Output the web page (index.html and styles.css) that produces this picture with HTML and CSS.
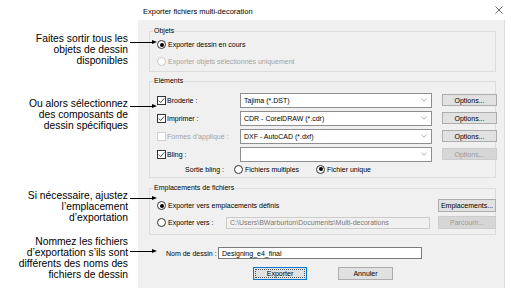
FILE: index.html
```html
<!DOCTYPE html>
<html lang="fr">
<head>
<meta charset="utf-8">
<title>Exporter fichiers multi-decoration</title>
<link rel="stylesheet" href="styles.css">
</head>
<body>
<div class="page">
  <aside class="notes">
    <p class="note n1">Faites sortir tous les<br>objets de dessin<br>disponibles<span class="arrow"></span></p>
    <p class="note n2">Ou alors sélectionnez<br>des composants de<br>dessin spécifiques<span class="arrow"></span></p>
    <p class="note n3">Si nécessaire, ajustez<br>l’emplacement<br>d’exportation<span class="arrow"></span></p>
    <p class="note n4">Nommez les fichiers<br>d’exportation s’ils sont<br>différents des noms des<br>fichiers de dessin<span class="arrow"></span></p>
  </aside>

  <div class="dialog">
    <div class="titlebar">
      <span class="title">Exporter fichiers multi-decoration</span>
      <svg class="close" width="8" height="8" viewBox="0 0 8 8"><path d="M0.5 0.5 L7.5 7.5 M7.5 0.5 L0.5 7.5" stroke="#444" stroke-width="0.8" fill="none"/></svg>
    </div>

    <div class="body">
      <fieldset class="grp objets">
        <legend>Objets</legend>
        <div class="row"><span class="radio on"></span><span>Exporter dessin en cours</span></div>
        <div class="row off"><span class="radio"></span><span>Exporter objets sélectionnés uniquement</span></div>
      </fieldset>

      <fieldset class="grp elements">
        <legend>Eléments</legend>
        <div class="egrid">
          <div class="lab"><span class="check on"><svg width="7" height="7" viewBox="0 0 7 7"><path d="M0.8 3.6 L2.7 5.5 L6.3 1.3" stroke="#222" stroke-width="0.8" fill="none"/></svg></span><span>Broderie :</span></div>
          <div class="combo"><span>Tajima (*.DST)</span><svg width="6" height="4" viewBox="0 0 6 4"><path d="M0.5 0.8 L3 3.2 L5.5 0.8" stroke="#888" stroke-width="0.7" fill="none"/></svg></div>
          <div class="btn">Options...</div>

          <div class="lab"><span class="check on"><svg width="7" height="7" viewBox="0 0 7 7"><path d="M0.8 3.6 L2.7 5.5 L6.3 1.3" stroke="#222" stroke-width="0.8" fill="none"/></svg></span><span>Imprimer :</span></div>
          <div class="combo"><span>CDR - CorelDRAW (*.cdr)</span><svg width="6" height="4" viewBox="0 0 6 4"><path d="M0.5 0.8 L3 3.2 L5.5 0.8" stroke="#888" stroke-width="0.7" fill="none"/></svg></div>
          <div class="btn">Options...</div>

          <div class="lab off"><span class="check"></span><span>Formes d’appliqué :</span></div>
          <div class="combo"><span>DXF - AutoCAD (*.dxf)</span><svg width="6" height="4" viewBox="0 0 6 4"><path d="M0.5 0.8 L3 3.2 L5.5 0.8" stroke="#888" stroke-width="0.7" fill="none"/></svg></div>
          <div class="btn">Options...</div>

          <div class="lab"><span class="check on"><svg width="7" height="7" viewBox="0 0 7 7"><path d="M0.8 3.6 L2.7 5.5 L6.3 1.3" stroke="#222" stroke-width="0.8" fill="none"/></svg></span><span>Bling :</span></div>
          <div class="combo"><span></span><svg width="6" height="4" viewBox="0 0 6 4"><path d="M0.5 0.8 L3 3.2 L5.5 0.8" stroke="#888" stroke-width="0.7" fill="none"/></svg></div>
          <div class="btn off">Options...</div>
        </div>
        <div class="sortie">
          <span class="slab">Sortie bling :</span>
          <span class="opt first"><span class="radio"></span><span>Fichiers multiples</span></span>
          <span class="opt"><span class="radio on"></span><span>Fichier unique</span></span>
        </div>
      </fieldset>

      <fieldset class="grp places">
        <legend>Emplacements de fichiers</legend>
        <div class="pgrid">
          <div class="row wide"><span class="radio on"></span><span>Exporter vers emplacements définis</span></div>
          <div class="btn tall">Emplacements...</div>
          <div class="row"><span class="radio"></span><span>Exporter vers :</span></div>
          <div class="field off">C:\Users\BWarburton\Documents\Multi-decorations</div>
          <div class="btn tall off">Parcourir...</div>
        </div>
      </fieldset>

      <div class="namerow">
        <span class="nlab">Nom de dessin :</span>
        <div class="field">Designing_e4_final</div>
      </div>

      <div class="actions">
        <div class="btn tall default"><span>Exporter</span></div>
        <div class="btn tall">Annuler</div>
      </div>
    </div>
  </div>
</div>
</body>
</html>
```

FILE: styles.css
```css
* { box-sizing: border-box; }
html, body { margin: 0; padding: 0; background: #fff; }

.page {
  display: flex;
  width: 511px;
  height: 303px;
  overflow: hidden;
}

/* callouts */
.notes {
  width: 138px;
  flex: none;
  padding-right: 10px;
  display: flex;
  flex-direction: column;
  font-family: "Liberation Sans", Arial, sans-serif;
  font-size: 10.3px;
  line-height: 11px;
  color: #000;
  text-align: right;
  position: relative;
  z-index: 2;
}
.note { margin: 0; position: relative; white-space: nowrap; }
.n1 { margin-top: 32.5px; }
.n2 { margin-top: 32px; }
.n3 { margin-top: 59px; }
.n4 { margin-top: 13px; }

.arrow {
  position: absolute;
  left: calc(100% + 2px);
  width: 22px;
  height: 1px;
  background: #000;
}
.arrow::after {
  content: "";
  position: absolute;
  right: -5px;
  top: -2px;
  border-left: 5px solid #000;
  border-top: 2.5px solid transparent;
  border-bottom: 2.5px solid transparent;
}
.n1 .arrow { top: 9.5px; }
.n2 .arrow { top: 8.5px; }
.n3 .arrow { top: 8.5px; }
.n4 .arrow { top: 15.5px; }

/* dialog */
.dialog {
  width: 367px;
  flex: none;
  display: flex;
  flex-direction: column;
  font-family: "Liberation Sans", Arial, sans-serif;
  font-size: 7px;
  color: #000;
}
.titlebar {
  height: 20px;
  background: #fff;
  display: flex;
  align-items: center;
  justify-content: space-between;
  padding: 2px 2px 0 5px;
  font-size: 7.5px;
}
.close { display: block; margin-top: -2px; }

.body {
  height: 268px;
  background: #f0f0f0;
  padding: 6px 8px 0 11px;
  border-right: 1px solid #dcdcdc;
}

.grp {
  margin: 0;
  border: 1px solid #dcdcdc;
  padding: 0 8px 0 7px;
  min-width: 0;
}
.grp legend {
  padding: 0 1px;
  margin-left: -4px;
  height: 10px;
  line-height: 10px;
  font-size: 7px;
}
.objets { padding-bottom: 1px; }
.elements { margin-top: 4px; padding-top: 5px; padding-bottom: 2px; }
.places { margin-top: 5px; padding: 4px 7px 3px 7px; }

.row {
  height: 17px;
  display: flex;
  align-items: center;
  white-space: nowrap;
}
.off { color: #a3a3a3; }

.radio {
  width: 9px;
  height: 9px;
  flex: none;
  border-radius: 50%;
  border: 1px solid #333;
  background: #fff;
  margin-right: 2px;
  position: relative;
}
.radio.on::after {
  content: "";
  position: absolute;
  left: 1.5px;
  top: 1.5px;
  width: 4px;
  height: 4px;
  border-radius: 50%;
  background: #000;
}
.off .radio { border-color: #c6c6c6; }

.check {
  width: 9px;
  height: 9px;
  flex: none;
  border: 1px solid #333;
  background: #fff;
  margin-right: 1px;
  display: flex;
  align-items: center;
  justify-content: center;
}
.off .check { border-color: #cfcfcf; }

.egrid {
  display: grid;
  grid-template-columns: 73px 192px 55px;
  column-gap: 10px;
  grid-auto-rows: 18px;
  align-items: center;
}
.lab { display: flex; align-items: center; white-space: nowrap; }

.combo {
  height: 15px;
  border: 1px solid #8e8e8e;
  background: #fff;
  display: flex;
  align-items: center;
  justify-content: space-between;
  padding: 0 4px 0 3px;
  white-space: nowrap;
}

.btn {
  height: 12px;
  border: 1px solid #adadad;
  background: #e1e1e1;
  display: flex;
  align-items: center;
  justify-content: center;
  white-space: nowrap;
}
.btn.tall { height: 13px; }
.btn.off { background: #d6d6d6; border-color: #cdcdcd; color: #9a9a9a; }
.btn.default { border-color: #0078d7; padding: 1px; }
.btn.default span {
  flex: 1;
  align-self: stretch;
  display: flex;
  align-items: center;
  justify-content: center;
  outline: 1px dotted #555;
  outline-offset: -1px;
}

.sortie {
  height: 12px;
  display: flex;
  align-items: center;
  white-space: nowrap;
}
.slab { width: 73px; text-align: right; padding-right: 6px; }
.opt { display: flex; align-items: center; }
.opt.first { margin-left: 4px; width: 82px; }

.pgrid {
  display: grid;
  grid-template-columns: 61px 204px 58px;
  column-gap: 8px;
  grid-auto-rows: 17px;
  align-items: center;
}
.row.wide { grid-column: 1 / 3; }

.field {
  height: 12px;
  border: 1px solid #7a7a7a;
  background: #fff;
  padding: 0 3px;
  display: flex;
  align-items: center;
  white-space: nowrap;
  overflow: hidden;
}
.field.off { border-color: #cccccc; background: #f0f0f0; color: #7a7a7a; }

.namerow {
  margin-top: 12px;
  padding-left: 17px;
  display: flex;
  align-items: center;
}
.nlab { width: 52px; white-space: nowrap; }
.namerow .field { width: 204px; }

.actions {
  margin-top: 8px;
  padding-left: 104px;
  display: flex;
  gap: 31px;
}
.actions .btn:first-child { width: 54px; }
.actions .btn:last-child { width: 55px; }
```
